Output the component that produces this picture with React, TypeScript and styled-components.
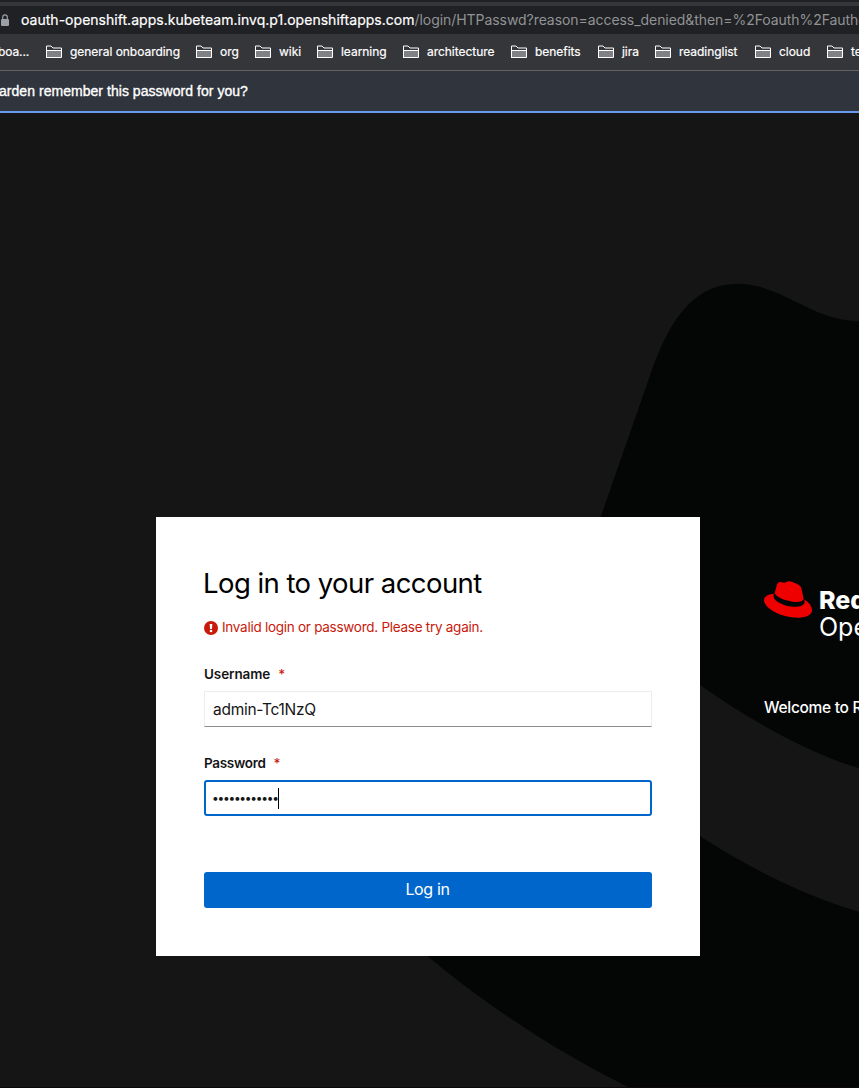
import React from "react";
import styled, { createGlobalStyle } from "styled-components";

const GlobalStyle = createGlobalStyle`
  * { box-sizing: border-box; }
  html, body { margin: 0; padding: 0; background: #151515; }
  body { font-family: Inter, "Liberation Sans", sans-serif; overflow: hidden; }
`;

const Window = styled.div`
  width: 859px;
  height: 1088px;
  display: flex;
  flex-direction: column;
  overflow: hidden;
  white-space: nowrap;
`;

const TabEdge = styled.div`
  flex: none;
  height: 6px;
  background: #35363a;
  border-top: 2px solid #202124;
`;

const AddressBar = styled.div`
  flex: none;
  height: 28px;
  display: flex;
  align-items: center;
  padding-bottom: 1px;
  background: #202124;
  color: #919395;
  font-size: 14px;
`;

const LockIcon = styled.svg`
  flex: none;
  width: 10px;
  height: 12px;
  margin-right: 11px;
`;

const Host = styled.span`
  color: #fff;
  letter-spacing: 0.025px;
  -webkit-text-stroke: 0.2px #fff;
`;

const Path = styled.span`
  letter-spacing: -0.06px;
`;

const BookmarkBar = styled.div`
  flex: none;
  height: 37px;
  display: flex;
  align-items: center;
  gap: 16px;
  padding-bottom: 1px;
  background: #35363a;
  border-bottom: 1px solid #626365;
  color: #fff;
  font-size: 12px;
`;

const Bookmark = styled.div<{ $width: number }>`
  flex: none;
  display: flex;
  align-items: center;
  gap: 8px;
  width: ${(p) => p.$width}px;
  -webkit-text-stroke: 0.2px #fff;
`;

const FolderIcon = styled.svg`
  flex: none;
  width: 16px;
  height: 14px;
`;

const BookmarkText = styled.span`
  letter-spacing: -0.04px;
`;

const FirstBookmarkText = styled(BookmarkText)`
  margin-left: -2px;
  letter-spacing: -0.1px;
`;

const SaveBanner = styled.div`
  flex: none;
  height: 42px;
  display: flex;
  align-items: center;
  background: #2f343d;
  border-bottom: 2px solid #6a99f0;
  color: #fff;
  font: 14px "Liberation Sans", sans-serif;
  letter-spacing: 0.04px;
  text-indent: -1px;
  -webkit-text-stroke: 0.35px #fff;
`;

const Main = styled.main`
  position: relative;
  flex: 1;
  display: flex;
  align-items: flex-start;
  gap: 64px;
  padding: 404px 0 0 156px;
  background: #151515;
  border-bottom: 1px solid #0c080b;
  overflow: hidden;
`;

const Backdrop = styled.svg`
  position: absolute;
  left: 0;
  top: 0;
  width: 859px;
  height: 975px;
`;

const Card = styled.section`
  position: relative;
  flex: none;
  width: 544px;
  height: 439px;
  padding: 48px;
  display: flex;
  flex-direction: column;
  background: #fff;
  color: #151515;
`;

const Title = styled.h1`
  margin: 0 0 16px -1px;
  font-size: 27.5px;
  line-height: 37px;
  height: 36px;
  font-weight: 400;
  letter-spacing: -0.55px;
  color: #000;
`;

const ErrorLine = styled.p`
  margin: 0 0 26px;
  display: flex;
  align-items: center;
  gap: 4px;
  font-size: 13.5px;
  line-height: 21px;
  height: 21px;
  letter-spacing: -0.27px;
  color: #c9190b;
`;

const Field = styled.div`
  display: flex;
  flex-direction: column;
  gap: 6px;
  margin-bottom: 26px;
`;

const Label = styled.label<{ $spacing: number }>`
  display: flex;
  gap: 8px;
  font-size: 13.5px;
  line-height: 21px;
  font-weight: 600;
  letter-spacing: ${(p) => p.$spacing}px;
`;

const Required = styled.span`
  font-weight: 500;
  color: #c9190b;
`;

const TextBox = styled.div<{ $focused?: boolean }>`
  height: 36px;
  display: flex;
  align-items: center;
  font-size: 15.5px;
  letter-spacing: -0.28px;
  border: ${(p) => (p.$focused ? "2px solid #06c" : "1px solid #ededed")};
  border-bottom-color: ${(p) => (p.$focused ? "#06c" : "#8a8d90")};
  border-radius: ${(p) => (p.$focused ? 3 : 0)}px;
  padding-left: ${(p) => (p.$focused ? 6 : 8)}px;
`;

const Dots = styled.span`
  font-size: 12px;
  line-height: 14px;
  padding-bottom: 1px;
  letter-spacing: -1.28px;
`;

const Caret = styled.span`
  width: 1px;
  height: 21px;
  background: #000;
`;

const LoginButton = styled.button`
  height: 36px;
  margin-top: 30px;
  padding: 0 1px 2px 0;
  border: 0;
  border-radius: 3px;
  background: #06c;
  color: #fff;
  font: 16px Inter, sans-serif;
  letter-spacing: -0.35px;
`;

const Aside = styled.aside`
  position: relative;
  flex: none;
  padding-top: 64px;
  color: #fff;
`;

const Brand = styled.div`
  display: flex;
  gap: 7px;
`;

const Hat = styled.svg`
  flex: none;
  width: 48px;
  height: 37px;
`;

const BrandName = styled.div`
  padding-top: 6px;
  font-size: 25px;
  line-height: 27px;
`;

const BrandStrong = styled.div`
  font-weight: 800;
`;

const Welcome = styled.p`
  margin: 55px 0 0;
  font-size: 15.5px;
  line-height: 24px;
  font-weight: 450;
  letter-spacing: -0.3px;
`;

const bookmarks = [
  { name: "general onboarding", width: 134 },
  { name: "org", width: 43 },
  { name: "wiki", width: 46 },
  { name: "learning", width: 70 },
  { name: "architecture", width: 92 },
  { name: "benefits", width: 71 },
  { name: "jira", width: 41 },
  { name: "readinglist", width: 84 },
  { name: "cloud", width: 56 },
  { name: "tech", width: 60 },
];

function Folder() {
  return (
    <FolderIcon viewBox="0 0 16 14">
      <path d="M1 5.5H15V12.5H1Z" fill="#808184" />
      <path d="M0.5 13V1H5L7 3H15.5V12.5H0.5M0.5 5.5H15.5" fill="none" stroke="#fff" />
    </FolderIcon>
  );
}

export default function App() {
  return (
    <Window>
      <GlobalStyle />
      <TabEdge />
      <AddressBar>
        <LockIcon viewBox="0 0 10 12">
          <rect x="1" y="5" width="8" height="7" rx="1" fill="#9aa0a6" />
          <path d="M2.7 5.5V3.2a2.3 2.3 0 0 1 4.6 0v2.3" fill="none" stroke="#9aa0a6" strokeWidth="1.2" />
        </LockIcon>
        <Host>oauth-openshift.apps.kubeteam.invq.p1.openshiftapps.com</Host>
        <Path>/login/HTPasswd?reason=access_denied&amp;then=%2Foauth%2Fauthorize</Path>
      </AddressBar>
      <BookmarkBar>
        <Bookmark $width={30}>
          <FirstBookmarkText>boa...</FirstBookmarkText>
        </Bookmark>
        {bookmarks.map((b) => (
          <Bookmark key={b.name} $width={b.width}>
            <Folder />
            <BookmarkText>{b.name}</BookmarkText>
          </Bookmark>
        ))}
      </BookmarkBar>
      <SaveBanner>arden remember this password for you?</SaveBanner>
      <Main>
        <Backdrop viewBox="0 113 859 975">
          <path
            d="M600.7 517L654 364C672 317 695 284 738 283.7C782 284 812 321 859 321V768.3C806 752 748 719 700 685L560 640Z"
            fill="#040606"
          />
          <path
            d="M400 930Q413 945 427.3 956C487 1006 557 1052 630 1088H859V911.7C806 896 750 869 700 836L400 800Z"
            fill="#040606"
          />
        </Backdrop>
        <Card>
          <Title>Log in to your account</Title>
          <ErrorLine>
            <svg width="14" height="14" viewBox="0 0 14 14">
              <circle cx="7" cy="7" r="7" fill="#c9190b" />
              <path d="M5.7 3H8.3L8 8H6Z" fill="#fff" />
              <circle cx="7" cy="10" r="1.3" fill="#fff" />
            </svg>
            <span>Invalid login or password. Please try again.</span>
          </ErrorLine>
          <Field>
            <Label $spacing={-0.1}>
              Username <Required>*</Required>
            </Label>
            <TextBox>admin-Tc1NzQ</TextBox>
          </Field>
          <Field>
            <Label $spacing={-0.3}>
              Password <Required>*</Required>
            </Label>
            <TextBox $focused>
              <Dots>••••••••••••</Dots>
              <Caret />
            </TextBox>
          </Field>
          <LoginButton>Log in</LoginButton>
        </Card>
        <Aside>
          <Brand>
            <Hat viewBox="72 62 144 111">
              <path
                d="M101 100C84 102 72 108 72 119C72 143 120 172 176 172C200 172 216 163 216 150C216 138 208 126 193 118L194 126C192 137 176 141 156 139C130 137 102 122 101 110Z"
                fill="#e00"
              />
              <path
                d="M104 99L111 72C113 66 119 63 125 66C131 68 134 68 139 65C145 61 154 64 162 67C174 71 182 76 184 83L191 116C188 124 176 127 158 124C132 121 108 109 104 99Z"
                fill="#e00"
              />
            </Hat>
            <BrandName>
              <BrandStrong>Red Hat</BrandStrong>
              <div>OpenShift</div>
            </BrandName>
          </Brand>
          <Welcome>Welcome to Red Hat OpenShift.</Welcome>
        </Aside>
      </Main>
    </Window>
  );
}
